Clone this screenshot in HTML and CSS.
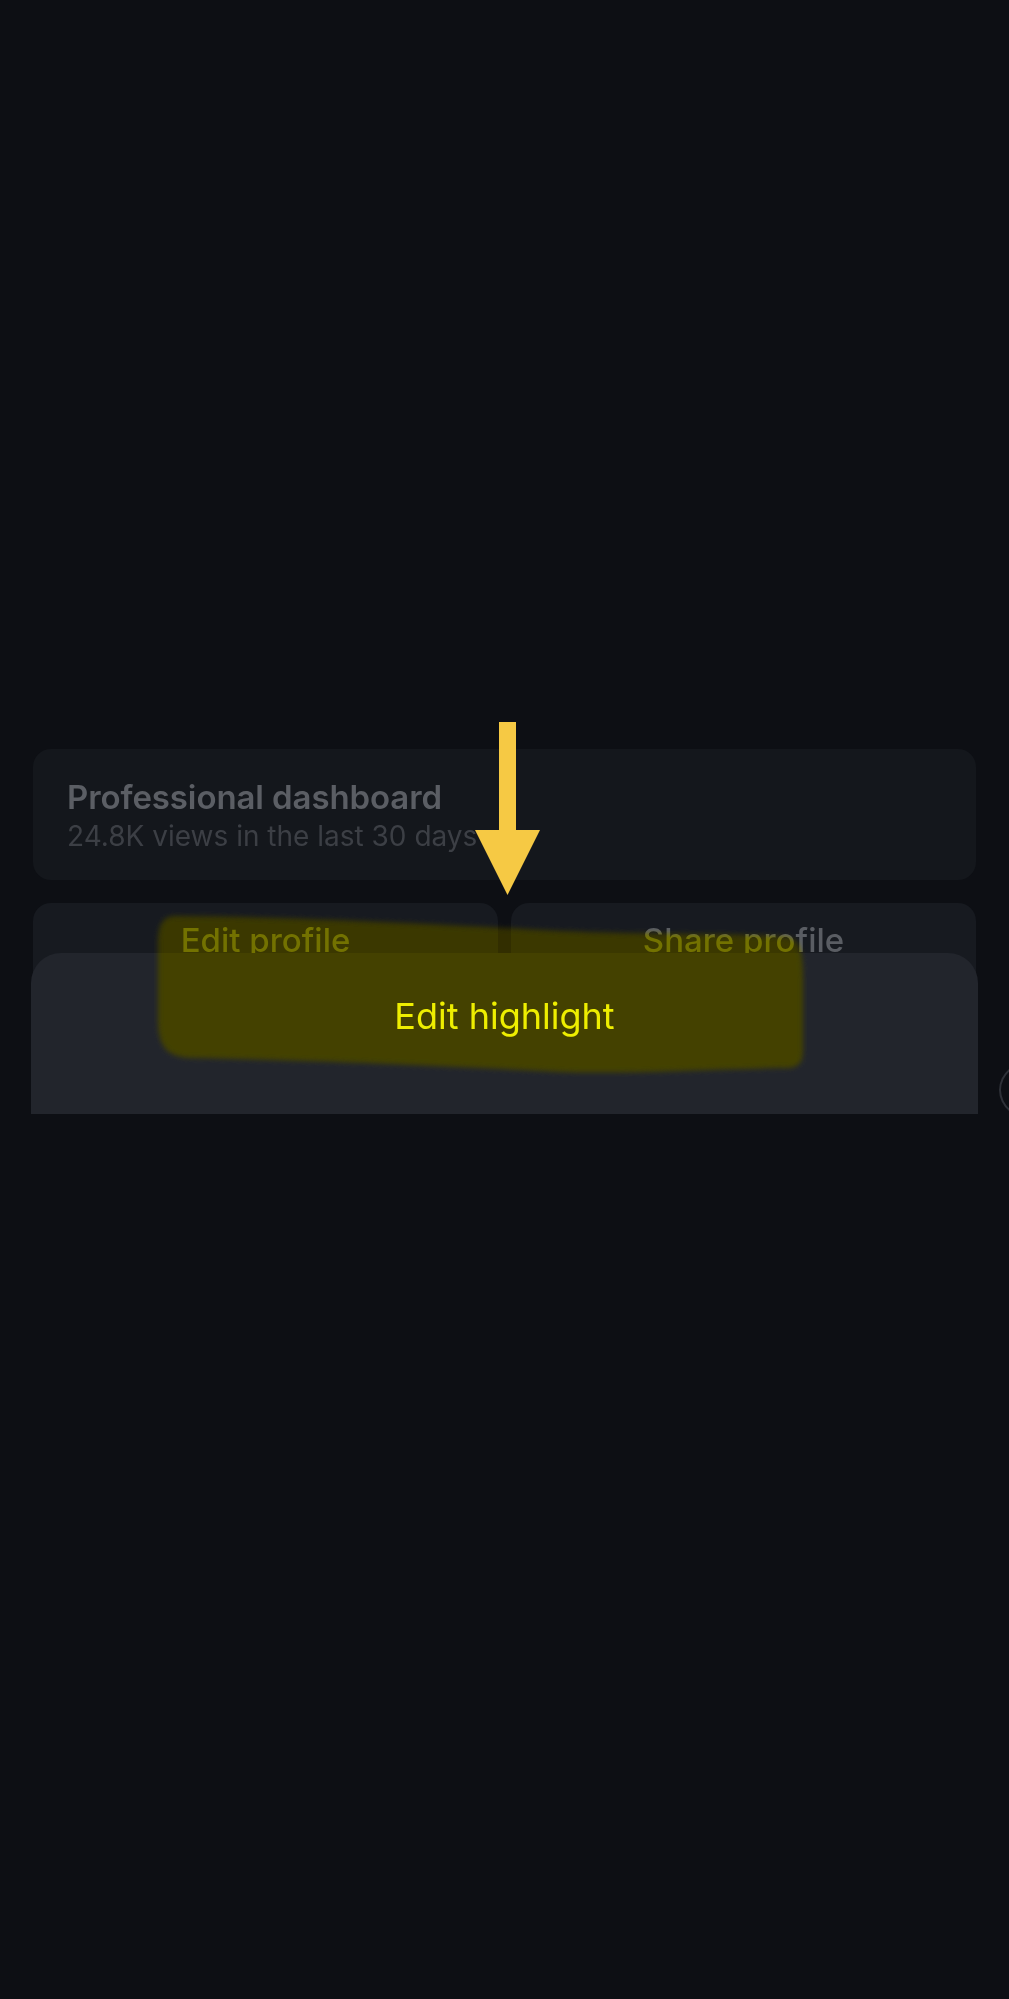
FILE: index.html
```html
<!DOCTYPE html>
<html lang="en">
<head>
<meta charset="utf-8">
<title>Edit highlight</title>
<link rel="stylesheet" href="styles.css">
</head>
<body>
<div class="page">
  <section class="dash-card">
    <div class="dash-title">Professional dashboard</div>
    <div class="dash-sub">24.8K views in the last 30 days</div>
  </section>
  <div class="btn-row">
    <div class="btn">Edit profile</div>
    <div class="btn">Share profile</div>
  </div>

  <div class="sheet">
    <div class="sheet-item">Edit highlight</div>
  </div>

  <div class="ring"></div>

  <svg class="marker" width="1009" height="1200" viewBox="0 0 1009 1200" aria-hidden="true">
    <defs>
      <filter id="soft" x="-5%" y="-20%" width="110%" height="140%">
        <feGaussianBlur stdDeviation="2.6"/>
      </filter>
    </defs>
    <path filter="url(#soft)" fill="rgb(147,144,0)" d="M 176 916 C 300 917, 450 925, 560 931 C 650 935, 740 933, 788 937 C 801 940, 803 955, 803 980 L 803 1050 C 803 1065, 797 1069, 780 1068 C 700 1070, 620 1074, 560 1072 C 450 1066, 300 1060, 190 1058 C 166 1057, 158 1045, 158 1020 L 158 945 C 158 925, 162 916, 176 916 Z"/>
  </svg>

  <svg class="arrow" width="1009" height="1200" viewBox="0 0 1009 1200" aria-hidden="true">
    <rect x="499" y="722" width="17" height="112" fill="#f6c944"/>
    <polygon points="475,830 540,830 507.5,895" fill="#f6c944"/>
  </svg>
</div>
</body>
</html>
```

FILE: styles.css
```css
html, body {
  margin: 0;
  padding: 0;
  background: #0d0f14;
}

body {
  width: 1009px;
  min-height: 1999px;
  overflow: hidden;
  font-family: "Inter", "Liberation Sans", sans-serif;
  color: #5d6066;
}

.page {
  position: relative;
  padding: 749px 33px 0 33px;
  min-height: 1250px;
  overflow: hidden;
}

.dash-card {
  height: 131px;
  box-sizing: border-box;
  padding: 29px 34px 0 34px;
  background: #14171c;
  border-radius: 18px;
}

.dash-title {
  font-size: 33px;
  line-height: 39px;
  font-weight: 600;
  letter-spacing: -0.1px;
  color: #5b5e64;
}

.dash-sub {
  margin-top: 2px;
  font-size: 28px;
  line-height: 34px;
  font-weight: 400;
  color: #3c3f45;
}

.btn-row {
  margin-top: 23px;
  display: grid;
  grid-template-columns: 1fr 1fr;
  gap: 13px;
}

.btn {
  height: 90px;
  box-sizing: border-box;
  padding-top: 17px;
  text-align: center;
  background: #171a20;
  border-radius: 18px;
  font-size: 33px;
  line-height: 40px;
  font-weight: 500;
  color: #5a5d63;
}

.sheet {
  position: absolute;
  top: 953px;
  left: 31px;
  width: 947px;
  height: 161px;
  box-sizing: border-box;
  padding-top: 42px;
  background: #22252c;
  border-radius: 30px 30px 0 0;
  text-align: center;
}

.sheet-item {
  font-size: 36px;
  line-height: 43px;
  font-weight: 400;
  color: #ececec;
}

.ring {
  position: absolute;
  top: 1060px;
  left: 999px;
  width: 70px;
  height: 60px;
  border: 2px solid #2e3138;
  border-radius: 50%;
  box-sizing: border-box;
}

.marker {
  position: absolute;
  top: 0;
  left: 0;
  mix-blend-mode: hard-light;
  pointer-events: none;
}

.arrow {
  position: absolute;
  top: 0;
  left: 0;
  pointer-events: none;
}
```
